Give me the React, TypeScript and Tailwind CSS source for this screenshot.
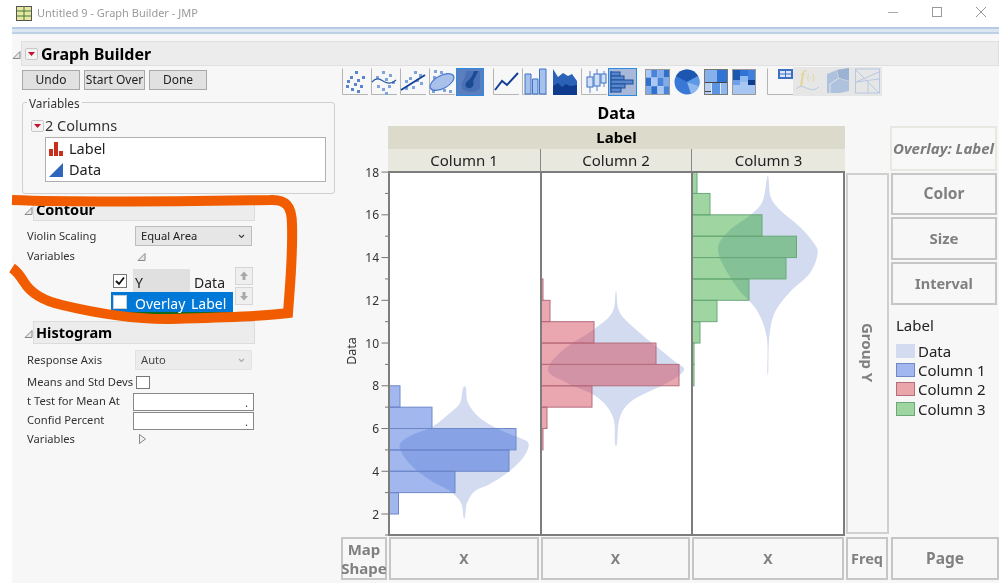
import type { ReactNode } from "react";

const yOf = (v: number) => 514 - (v - 2) * 21.37;

// catmull-rom through the outline points, closed
const smooth = (pts: number[][]) => {
  let d = `M${pts[0][0]} ${pts[0][1]}`;
  const n = pts.length;
  for (let i = 0; i < n; i++) {
    const p0 = pts[(i - 1 + n) % n];
    const p1 = pts[i];
    const p2 = pts[(i + 1) % n];
    const p3 = pts[(i + 2) % n];
    const c1x = p1[0] + (p2[0] - p0[0]) / 6;
    const c1y = p1[1] + (p2[1] - p0[1]) / 6;
    const c2x = p2[0] - (p3[0] - p1[0]) / 6;
    const c2y = p2[1] - (p3[1] - p1[1]) / 6;
    d += `C${c1x.toFixed(1)} ${c1y.toFixed(1)} ${c2x.toFixed(1)} ${c2y.toFixed(1)} ${p2[0]} ${p2[1]}`;
  }
  return d + "Z";
};

const panels = [
  {
    x: 390,
    w: 150,
    fill: "#2f5fda",
    stroke: "#6f88c8",
    bars: [[7, 10], [6, 42], [5, 126], [4, 119], [3, 65], [2, 8.5]],
    violin: [
      [463, 388], [466, 388], [468, 403], [480, 418], [500, 430], [520, 438], [528.7, 444], [523, 458],
      [507, 473], [490, 484], [475, 491], [467, 503], [465, 517], [463.5, 517], [461, 503], [450, 491],
      [433, 482], [415, 469], [403, 455], [400, 444], [412, 435], [432, 427], [450, 413], [460, 403],
    ],
  },
  {
    x: 542,
    w: 149,
    fill: "#d23c50",
    stroke: "#b56d7d",
    bars: [[12, 1], [11, 8], [10, 52], [9, 114], [8, 137], [7, 50], [6, 5], [5, 1]],
    violin: [
      [615.5, 293], [616.5, 293], [620, 313], [640, 333], [673, 360], [684, 370], [667, 383], [633, 400],
      [620, 417], [617, 443], [615, 443], [613, 417], [597, 397], [567, 383], [548, 370], [563, 350],
      [593, 330], [612, 313],
    ],
  },
  {
    x: 693,
    w: 150,
    fill: "#28a22d",
    stroke: "#6aa87a",
    bars: [[17, 4], [16, 17], [15, 69], [14, 103.5], [13, 93], [12, 56], [11, 24], [10, 7], [9, 1], [8, 1]],
    violin: [
      [767, 178], [768.5, 178], [770.7, 197], [780, 210], [800, 227], [813, 242], [817.7, 253], [810, 273],
      [790, 292], [775, 312], [769.3, 337], [768.3, 371], [767.3, 371], [766.7, 337], [756.7, 310],
      [736.7, 287], [718.3, 253], [726.7, 233], [753, 213], [763, 200],
    ],
  },
];

const Plot = ({ p }: { p: (typeof panels)[number] }) => (
  <svg width={p.w} height={361} viewBox={`${p.x} 173 ${p.w} 361`} className="block">
    <path d={smooth(p.violin)} fill="#d2dbef" />
    {p.bars.map(([v, w]) => (
      <rect
        key={v}
        x={p.x - 1}
        y={yOf(v + 1)}
        width={w + 1}
        height={21.37}
        fill={p.fill}
        fillOpacity={0.45}
        stroke={p.stroke}
        strokeWidth={1}
      />
    ))}
  </svg>
);

const Axis = () => {
  const marks = Array.from({ length: 17 }, (_, i) => i + 2);
  return (
    <svg width={48} height={365} viewBox="340 171 48 365" className="block overflow-visible">
      {marks.map((v) => (
        <line
          key={v}
          x1={v % 2 === 0 ? 381.5 : 385}
          x2={388}
          y1={yOf(v)}
          y2={yOf(v)}
          stroke="#777"
          strokeWidth={1}
        />
      ))}
      <line x1={385} x2={388} y1={535} y2={535} stroke="#777" />
      {marks
        .filter((v) => v % 2 === 0)
        .map((v) => (
          <text key={v} x={379} y={yOf(v) + 4.5} textAnchor="end" fontSize={12} fill="#333">
            {v}
          </text>
        ))}
      <text transform="translate(356 351) rotate(-90)" textAnchor="middle" fontSize={12.5} fill="#333">
        Data
      </text>
    </svg>
  );
};

const Tri = ({ open = true }: { open?: boolean }) => (
  <svg width={9} height={10} viewBox="0 0 9 10" className="block shrink-0">
    {open ? (
      <path d="M1 8.5H8V1.5Z" fill="#e8e8e8" stroke="#888" />
    ) : (
      <path d="M1.5 0.5V9.5L7.5 5Z" fill="#f0f0f0" stroke="#888" />
    )}
  </svg>
);

const RedMenu = () => (
  <svg width={13} height={12} viewBox="0 0 13 12" className="block shrink-0">
    <rect x={0.5} y={0.5} width={12} height={11} rx={1.5} fill="#f3f3f3" stroke="#c8c8c8" />
    <path d="M3 4H10L6.5 8Z" fill="#c8102e" />
  </svg>
);

const Header = ({ title }: { title: string }) => (
  <div className="flex items-center ml-[2px] w-[233px]">
    <span className="w-[9px] pt-[2px]">
      <Tri />
    </span>
    <div className="h-[23px] w-[222px] bg-[#ececec] border border-[#dcdcdc] pl-[2px] flex items-center text-[14.5px] font-bold text-black">
      {title}
    </div>
  </div>
);

const Dropdown = ({ label, disabled }: { label: string; disabled?: boolean }) => (
  <div
    className={`w-[117px] h-[20px] flex items-center justify-between pl-[5px] pr-[6px] text-[11.2px] border ${
      disabled ? "bg-[#ececec] border-[#e2e2e2] text-[#444]" : "bg-[#e6e6e6] border-[#bdbdbd] text-[#222]"
    }`}
  >
    {label}
    <svg width={7} height={5} viewBox="0 0 7 5">
      <path d="M1 1L3.5 3.5L6 1" fill="none" stroke={disabled ? "#aaa" : "#444"} strokeWidth={1.2} />
    </svg>
  </div>
);

const Arrow = ({ down }: { down?: boolean }) => (
  <div className="w-[18px] h-[18px] border border-[#d6d6d6] bg-[#efefef] flex items-center justify-center">
    <svg width={10} height={10} viewBox="0 0 10 10">
      <path d={down ? "M3.5 1H6.5V5H9L5 9.5L1 5H3.5Z" : "M3.5 9H6.5V5H9L5 0.5L1 5H3.5Z"} fill="#a8a8a8" />
    </svg>
  </div>
);

const LeftPanel = () => (
  <div className="w-[328px] shrink-0 pl-[10px]">
    <div className="flex gap-[4px] mt-[4px]">
      {[["Undo", 58], ["Start Over", 61], ["Done", 58]].map(([t, w]) => (
        <button
          key={t}
          style={{ width: w as number }}
          className="h-[20px] bg-[#e1e1e1] border border-[#a8a8a8] text-[12px] text-[#222] flex items-center justify-center whitespace-nowrap"
        >
          {t}
        </button>
      ))}
    </div>

    <div className="relative mt-[12px] w-[313px] h-[92px] border border-[#cfcfcf] rounded-[3px]">
      <span className="absolute left-[4px] -top-[8px] px-[2px] bg-[#f7f7f7] text-[11.8px] leading-[16px] text-[#333]">
        Variables
      </span>
      <div className="flex items-center pl-[8px] pt-[12px] h-[34px]">
        <RedMenu />
        <span className="text-[14.5px] text-[#333] ml-[1px]">2 Columns</span>
      </div>
      <div className="ml-[22px] w-[281px] h-[45px] bg-white border border-[#b0b0b0] pl-[2px] text-[14.5px] text-[#222]">
        <div className="flex items-center h-[21px] gap-[5px]">
          <svg width={16} height={16} viewBox="0 0 16 16">
            <path d="M1 8H5V15H1ZM6 1H10V15H6ZM11 10H15V15H11Z" fill="#c9301c" />
          </svg>
          Label
        </div>
        <div className="flex items-center h-[21px] gap-[5px]">
          <svg width={16} height={16} viewBox="0 0 16 16">
            <path d="M1 15L15 1V15Z" fill="#2f66bd" />
          </svg>
          Data
        </div>
      </div>
    </div>

    <div className="mt-[4px]">
      <Header title="Contour" />
    </div>
    <div className="flex items-center pl-[5px] mt-[5px] text-[11.2px] text-[#333]">
      <span className="w-[108px]">Violin Scaling</span>
      <Dropdown label="Equal Area" />
    </div>
    <div className="flex items-center pl-[5px] h-[21px] text-[11.2px] text-[#333]">
      <span className="w-[110px]">Variables</span>
      <Tri />
    </div>
    <div className="flex ml-[89px]">
      <div className="w-[122px] pt-[2px]">
        <div className="flex h-[23px] text-[14px] text-[#222]">
          <span className="w-[22px] flex items-center pl-[2px]">
            <svg width={14} height={14} viewBox="0 0 14 14">
              <rect x={0.5} y={0.5} width={13} height={13} fill="#fff" stroke="#777" />
              <path d="M3 7L6 10L11 3.5" fill="none" stroke="#111" strokeWidth={1.8} />
            </svg>
          </span>
          <span className="w-[57px] bg-[#e0e0e0] pl-[2px] pt-[3px] flex items-center">Y</span>
          <span className="pl-[4px] pt-[3px] flex items-center">Data</span>
        </div>
        <div className="flex h-[22px] bg-[#0078d7] border-b-[2px] border-[#0f6b1e] text-[14px] text-white">
          <span className="w-[22px] flex items-center pl-[2px]">
            <span className="w-[14px] h-[14px] bg-white border border-[#ccc]" />
          </span>
          <span className="w-[57px] pl-[2px] pt-[2px] flex items-center">Overlay</span>
          <span className="pl-[1px] pt-[2px] flex items-center">Label</span>
        </div>
      </div>
      <div className="flex flex-col gap-[2px] ml-[2px]">
        <Arrow />
        <Arrow down />
      </div>
    </div>

    <div className="mt-[7px]">
      <Header title="Histogram" />
    </div>
    <div className="flex items-center pl-[5px] mt-[6px] text-[11.2px] text-[#333]">
      <span className="w-[108px]">Response Axis</span>
      <Dropdown label="Auto" disabled />
    </div>
    <div className="flex items-center pl-[5px] mt-[5px] h-[14px] text-[11.2px] text-[#333]">
      <span className="w-[109px] whitespace-nowrap">Means and Std Devs</span>
      <span className="w-[14px] h-[13px] bg-white border border-[#777]" />
    </div>
    <div className="flex items-center pl-[5px] mt-[3px] h-[19px] text-[11.2px] text-[#333]">
      <span className="w-[106px]">t Test for Mean At</span>
      <div className="w-[121px] h-[18px] bg-white border border-[#888] flex items-end justify-end pr-[5px] leading-[14px]">.</div>
    </div>
    <div className="flex items-center pl-[5px] h-[19px] text-[11.2px] text-[#333]">
      <span className="w-[106px]">Confid Percent</span>
      <div className="w-[121px] h-[18px] bg-white border border-[#888] flex items-end justify-end pr-[5px] leading-[14px]">.</div>
    </div>
    <div className="flex items-center pl-[5px] h-[18px] text-[11.2px] text-[#333]">
      <span className="w-[111px]">Variables</span>
      <Tri open={false} />
    </div>
  </div>
);

const Ic = ({ w = 26, children, bare }: { w?: number; children: ReactNode; bare?: boolean }) => (
  <svg width={w} height={28} viewBox={`0 0 ${w} 28`} className="block shrink-0">
    {!bare && <path d={`M0.5 0.5V26.5H${w}`} fill="none" stroke="#b4b4b4" />}
    {children}
  </svg>
);

const Dots = ({ pts, c = "#5b84cf" }: { pts: number[][]; c?: string }) => (
  <>
    {pts.map(([x, y]) => (
      <rect key={`${x}-${y}`} x={x} y={y} width={3} height={3} fill={c} />
    ))}
  </>
);

const Toolbar = () => (
  <div className="flex items-start h-[28px] ml-[2px]">
    <Ic>
      <Dots pts={[[13, 3], [8, 8], [5, 12], [15, 11], [20, 8], [4, 17], [12, 15], [18, 17], [9, 20], [15, 22]]} />
    </Ic>
    <span className="w-[3px]" />
    <Ic>
      <Dots pts={[[11, 3], [18, 6], [5, 8], [14, 10], [21, 13], [6, 17], [11, 20], [17, 17], [14, 24]]} c="#7fa3dc" />
      <path d="M1 14C6 8 10 12 14 14S21 16 25 12" fill="none" stroke="#2c5aa8" strokeWidth={1.2} />
    </Ic>
    <span className="w-[3px]" />
    <Ic>
      <Dots pts={[[14, 3], [19, 6], [9, 9], [16, 11], [5, 12], [20, 14], [5, 19], [12, 18]]} c="#7fa3dc" />
      <path d="M1 22L25 7" fill="none" stroke="#123f9a" strokeWidth={1.8} />
    </Ic>
    <span className="w-[3px]" />
    <Ic>
      <Dots pts={[[5, 2], [11, 3], [4, 8], [17, 5], [14, 21], [20, 22], [3, 22]]} c="#7fa3dc" />
      <ellipse cx={13} cy={14} rx={13} ry={6.5} transform="rotate(-28 13 14)" fill="#a8c0ea" stroke="#4a7ad0" strokeWidth={1.2} />
    </Ic>
    <span className="w-[1px]" />
    <svg width={28} height={28} viewBox="0 0 28 28" className="block shrink-0">
      <rect x={0.5} y={0.5} width={27} height={27} fill="#5b7fbe" stroke="#2b8be0" />
      <path d="M10 3H24V20C22 25 8 25 6 20S10 10 10 3Z" fill="#4870b6" />
      <path d="M18 3H22C20 8 18 11 17 13C19 17 16 21 12 20S9 14 13 12C15 10 17 7 18 3Z" fill="#1b4a92" />
    </svg>
    <span className="w-[9px]" />
    <Ic>
      <path d="M2 22L9 13L14 17L25 5" fill="none" stroke="#123f9a" strokeWidth={2} />
    </Ic>
    <span className="w-[3px]" />
    <Ic w={25}>
      <path d="M3 6H9V26H3ZM10.5 11H16V26H10.5ZM17.5 1H24V26H17.5Z" fill="#a6c1ec" stroke="#3f73c4" />
    </Ic>
    <span className="w-[5px]" />
    <Ic w={25} bare>
      <path d="M1 1L6 9L11 5L16 8L20 6L25 13V27H1Z" fill="#2b62b8" />
      <path d="M1 18L6 15L10 19L14 16L18 18L25 17V27H1Z" fill="#0f3b8f" />
    </Ic>
    <span className="w-[4px]" />
    <Ic>
      <path d="M9 3V25M16 1V23M23 3V19" stroke="#5a86cc" />
      <rect x={6} y={9} width={6} height={10} fill="#cfdff6" stroke="#3f73c4" />
      <rect x={13} y={6} width={6} height={12} fill="#cfdff6" stroke="#3f73c4" />
      <rect x={20} y={6} width={5} height={9} fill="#cfdff6" stroke="#3f73c4" />
    </Ic>
    <span className="w-[1px]" />
    <svg width={29} height={28} viewBox="0 0 29 28" className="block shrink-0">
      <rect x={0.5} y={0.5} width={28} height={27} fill="#a8b8d8" stroke="#2b8be0" />
      <path d="M3 3V25" stroke="#1d4f9c" />
      {[[3, 4, 9], [3, 8, 13], [3, 12, 22], [3, 16, 14], [3, 20, 10]].map(([x, y, w]) => (
        <rect key={y} x={x} y={y} width={w} height={4} fill="#5a86cc" stroke="#1d4f9c" />
      ))}
    </svg>
    <span className="w-[8px]" />
    <Ic w={25} bare>
      {[0, 1, 2, 3].map((c) =>
        [0, 1, 2].map((r) => (
          <rect
            key={`${c}-${r}`}
            x={c * 6.25}
            y={1 + r * 8.6}
            width={6.25}
            height={8.6}
            fill={["#a9c8f4", "#4a84da", "#7fabea", "#2f6fce"][(c + r * 3) % 4]}
          />
        ))
      )}
      <rect x={0.5} y={1.5} width={24} height={25} fill="none" stroke="#999" />
    </Ic>
    <span className="w-[4px]" />
    <Ic bare>
      <circle cx={13} cy={14} r={12.5} fill="#3a78d8" />
      <path d="M13 14L2 8A12.5 12.5 0 0 1 24 8Z" fill="#1d56b0" />
      <path d="M13 14L24 8A12.5 12.5 0 0 1 25 18Z" fill="#5c9ae6" />
      <path d="M13 14L25 18A12.5 12.5 0 0 1 17 26Z" fill="#8db8f0" />
    </Ic>
    <span className="w-[4px]" />
    <Ic w={24} bare>
      <rect x={0.5} y={1.5} width={23} height={25} fill="#dfe8f6" stroke="#777" />
      <rect x={1} y={2} width={12} height={12} fill="#86b0ec" />
      <rect x={13} y={2} width={10} height={12} fill="#2f73d4" />
      <rect x={1} y={15} width={6} height={11} fill="#b7d0f2" />
      <rect x={8} y={15} width={8} height={11} fill="#5c94e4" />
      <rect x={17} y={15} width={6} height={11} fill="#8db8f0" />
      <path d="M1 14.5H23M1 23.5H7" stroke="#444" />
    </Ic>
    <span className="w-[4px]" />
    <Ic w={24} bare>
      <rect x={0.5} y={1.5} width={23} height={25} fill="#a8c6f2" stroke="#999" />
      <rect x={1} y={2} width={7} height={10} fill="#1d56b0" />
      <rect x={1} y={12} width={7} height={5} fill="#6da0e8" />
      <rect x={8} y={2} width={8} height={6} fill="#2f73d4" />
      <rect x={8} y={8} width={8} height={6} fill="#8db8f0" />
      <rect x={16} y={2} width={7} height={12} fill="#3f80dc" />
      <rect x={16} y={12} width={7} height={5} fill="#0f3b8f" />
    </Ic>
    <span className="w-[11px]" />
    <Ic>
      <rect x={11} y={1} width={15} height={10} fill="#3f6fc4" />
      <rect x={13} y={3} width={11} height={6} fill="#dce8fa" />
      <path d="M18.5 3V9M13 6H24" stroke="#3f6fc4" />
    </Ic>
    <div className="flex items-start h-[29px] -mt-[1px] bg-[#e6e6e6] pl-[2px] pr-[2px] gap-[5px]">
      <svg width={24} height={28} viewBox="0 0 24 28" className="block shrink-0">
        <text x={5} y={15} fontSize={16} fontStyle="italic" fontWeight={700} fontFamily="'Liberation Serif',serif" fill="#e4d59a">
          f
        </text>
        <text x={12} y={14} fontSize={9} fill="#e4d59a">
          (·)
        </text>
        <path d="M1 22C6 17 10 21 14 22S20 23 24 20" fill="none" stroke="#b8c8e4" />
      </svg>
      <svg width={26} height={28} viewBox="0 0 26 28" className="block shrink-0">
        <path d="M3 7L13 3L25 1V24L16 26H3Z" fill="#afc2dd" />
        <path d="M13 3L15 11L25 14M15 11L6 17V26" fill="none" stroke="#e6e6e6" />
        <path d="M13 3L25 1V14L15 11Z" fill="#9cb2d2" />
      </svg>
      <svg width={25} height={28} viewBox="0 0 25 28" className="block shrink-0">
        <rect x={0.5} y={2} width={24} height={24} fill="none" stroke="#b8c8e4" />
        <path d="M1 3L13 15V26M24 5L1 15L24 12M13 15L24 26" fill="none" stroke="#b8c8e4" />
      </svg>
    </div>
  </div>
);

const dropBox = "m-[1px] bg-[#f7f7f7] border-2 border-[#c6c6c6] flex items-center justify-center font-bold text-[#808080]";

const Legend = ({ fill, line, label }: { fill: string; line: string; label: string }) => (
  <div className="flex items-center h-[19.3px] gap-[3px]">
    <span className="w-[19px] h-[14px] border" style={{ background: fill, borderColor: line }} />
    <span>{label}</span>
  </div>
);

const Graph = () => (
  <div className="flex-1 min-w-0">
    <Toolbar />
    <div className="pl-[48px] w-[505px] h-[30px] flex items-end pb-[3px] justify-center text-[16px] font-bold text-black leading-[20px]">
      Data
    </div>
    <div className="grid grid-cols-[48px_152px_151px_154px_44px_110px] grid-rows-[23px_22px_365px_45px]">
      <div />
      <div className="col-span-3 bg-[#dcdacb] flex items-center justify-center text-[15px] font-bold text-black">Label</div>
      <div />
      <div className="row-span-2 ml-[1px] mr-[2px] bg-[#f8f8f8] border-2 border-[#e8e8e0] flex items-center justify-center italic font-bold text-[15px] text-[#7c7c7c] whitespace-nowrap">
        Overlay: Label
      </div>

      <div />
      {["Column 1", "Column 2", "Column 3"].map((c, i) => (
        <div
          key={c}
          className={`bg-[#e9e8df] flex items-center justify-center text-[15px] text-[#222] border-[#888] ${i > 0 ? "border-l" : ""}`}
        >
          {c}
        </div>
      ))}
      <div />

      <Axis />
      {panels.map((p, i) => (
        <div
          key={p.x}
          className={`bg-white border-t-2 border-b-2 border-l-2 border-[#7d7d7d] ${i === 2 ? "border-r-2" : ""}`}
        >
          <Plot p={p} />
        </div>
      ))}
      <div className="mt-[2px] mb-[2px] ml-[1px] bg-[#f7f7f7] border-2 border-[#d0d0d0] flex items-center justify-center">
        <span className="[writing-mode:vertical-rl] font-bold text-[15px] text-[#808080] mb-[1px]">Group Y</span>
      </div>
      <div className="flex flex-col">
        <div className={`${dropBox} mr-[2px] ml-[2px] mt-[2px] h-[42px] text-[15.5px]`}>Color</div>
        <div className={`${dropBox} mr-[2px] ml-[2px] h-[43px] text-[15px]`}>Size</div>
        <div className={`${dropBox} mr-[2px] ml-[2px] h-[43px] text-[14.5px]`}>Interval</div>
        <div className="pl-[7px] pt-[10px] text-[15px] text-[#222] leading-[18px]">
          <div className="h-[21px]">Label</div>
          <div className="pt-[4px]">
            <Legend fill="#d2dbef" line="#d2dbef" label="Data" />
            <Legend fill="#a1b7ee" line="#6f88c8" label="Column 1" />
            <Legend fill="#eaa5ab" line="#b56d7d" label="Column 2" />
            <Legend fill="#9ed5a0" line="#6aa87a" label="Column 3" />
          </div>
        </div>
      </div>

      <div className={`${dropBox} text-[15px] leading-[19px] text-center`}>
        Map
        <br />
        Shape
      </div>
      <div className={`${dropBox} text-[14px]`}>X</div>
      <div className={`${dropBox} text-[14px]`}>X</div>
      <div className={`${dropBox} text-[14px]`}>X</div>
      <div className={`${dropBox} text-[14.5px]`}>Freq</div>
      <div className={`${dropBox} mr-0 ml-[2px] text-[15.5px]`}>Page</div>
    </div>
  </div>
);

const App = () => (
  <div className="relative w-[999px] h-[583px] overflow-hidden bg-white font-['Noto_Sans',sans-serif] blur-[0.3px]">
    <div className="h-[27px] flex items-center">
      <svg width={16} height={15} viewBox="0 0 16 15" className="ml-[16px] block">
        <rect x={0.5} y={0.5} width={15} height={14} fill="#e8e6a0" stroke="#555" />
        <path d="M0.5 5H15.5M0.5 10H15.5M8 0.5V14.5" stroke="#3f7a3a" />
      </svg>
      <span className="ml-[5px] text-[11px] text-[#9a9a9a]">Untitled 9 - Graph Builder - JMP</span>
      <div className="ml-auto flex items-center">
        <svg width={111} height={14} viewBox="0 0 111 14" className="block mr-[8px] mb-[4px]">
          <path d="M8 7.5H18" stroke="#aaa" />
          <rect x={52.5} y={2.5} width={9} height={9} fill="none" stroke="#999" />
          <path d="M96 2L106 12M106 2L96 12" stroke="#999" />
        </svg>
      </div>
    </div>
    <div className="ml-[12px]">
      <div className="h-[2px] bg-[#b6cbe3]" />
      <div className="h-[3px] bg-[#dbe6f2]" />
      <div className="h-[2px] bg-[#bdd0e6]" />
    </div>
    <div className="ml-[12px] h-[549px] bg-[#f7f7f7] pt-[7px]">
      <div className="flex items-center h-[25px]">
        <span className="w-[9px] pt-[3px]">
          <Tri />
        </span>
        <div className="flex-1 h-[25px] bg-[#ececec] border border-[#e0e0e0] flex items-center pl-[3px] gap-[3px] text-[16px] font-bold text-black">
          <RedMenu />
          Graph Builder
        </div>
      </div>
      <div className="flex">
        <LeftPanel />
        <div className="pt-[2px] flex-1 min-w-0">
          <Graph />
        </div>
      </div>
    </div>
    <svg width={999} height={583} viewBox="0 0 999 583" className="absolute left-0 top-0 pointer-events-none">
      <path
        d="M12 200C90 203 200 201 270 200C286 199 292 206 292 225C293 255 290 285 288 313C260 317 200 318 167 319C130 319 95 313 62 305C40 300 30 292 24 282C19 274 15 270 12 268"
        fill="none"
        stroke="#f25c00"
        strokeWidth={10}
        strokeLinecap="butt"
      />
    </svg>
  </div>
);

export default App;
